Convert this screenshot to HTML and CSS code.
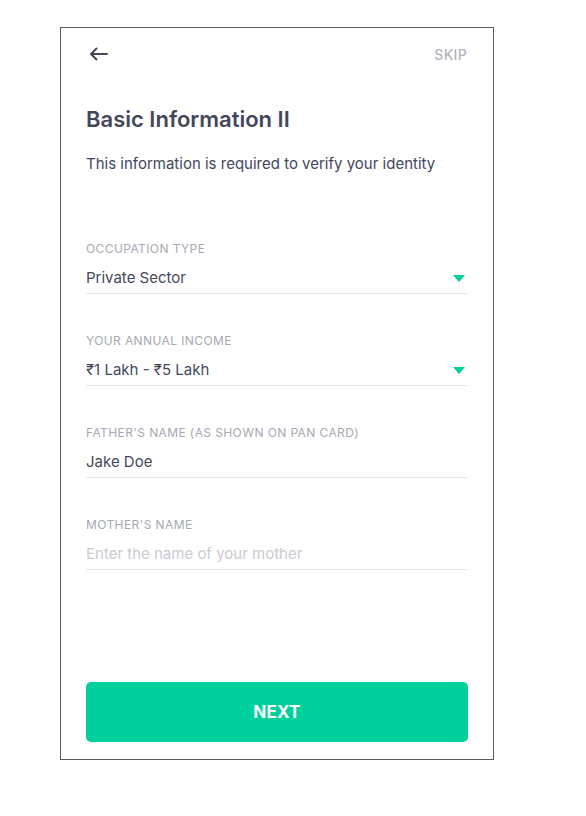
FILE: index.html
```html
<!DOCTYPE html>
<html lang="en">
<head>
<meta charset="utf-8">
<title>Basic Information II</title>
<link rel="stylesheet" href="styles.css">
</head>
<body>
<div class="frame">
  <header class="topbar">
    <svg class="back" width="24" height="24" viewBox="0 0 24 24" aria-label="Back">
      <path d="M21 12H5M10.5 6.5L5 12l5.5 5.5" fill="none" stroke="#44475b" stroke-width="2" stroke-linecap="round" stroke-linejoin="round"/>
    </svg>
    <span class="skip">SKIP</span>
  </header>

  <h1 class="title">Basic Information II</h1>
  <p class="subtitle">This information is required to verify your identity</p>

  <div class="fields">
    <div class="field">
      <div class="label">OCCUPATION TYPE</div>
      <div class="row">
        <span class="value">Private Sector</span>
        <span class="caret"></span>
      </div>
    </div>
    <div class="field">
      <div class="label">YOUR ANNUAL INCOME</div>
      <div class="row">
        <span class="value">₹1 Lakh - ₹5 Lakh</span>
        <span class="caret"></span>
      </div>
    </div>
    <div class="field">
      <div class="label">FATHER'S NAME (AS SHOWN ON PAN CARD)</div>
      <div class="row">
        <span class="value">Jake Doe</span>
      </div>
    </div>
    <div class="field">
      <div class="label">MOTHER'S NAME</div>
      <div class="row">
        <span class="value placeholder">Enter the name of your mother</span>
      </div>
    </div>
  </div>

  <button class="next">NEXT</button>
</div>
</body>
</html>
```

FILE: styles.css
```css
* { box-sizing: border-box; }

html, body {
  margin: 0;
  padding: 0;
  background: #ffffff;
}

body {
  font-family: Inter, Roboto, "Liberation Sans", Arial, sans-serif;
  color: #44475b;
}

.frame {
  margin: 27px 0 0 60px;
  width: 434px;
  height: 733px;
  border: 1px solid #5b5b5b;
  padding: 14px 25px 17px 25px;
  display: flex;
  flex-direction: column;
}

.topbar {
  height: 24px;
  display: flex;
  align-items: center;
  justify-content: space-between;
}

.back {
  display: block;
}

.skip {
  font-size: 14px;
  font-weight: 500;
  color: #b1b3bd;
  letter-spacing: 0.3px;
  margin-right: 1px;
}

.title {
  margin: 41px 0 0 0;
  font-size: 22px;
  line-height: 24px;
  font-weight: 600;
  color: #44475b;
}

.subtitle {
  margin: 23px 0 0 0;
  font-size: 15px;
  line-height: 20px;
  font-weight: 400;
  color: #44475b;
}

.fields {
  margin-top: 68px;
  display: flex;
  flex-direction: column;
  gap: 40px;
}

.field {
  border-bottom: 1px solid #e6e7eb;
}

.label {
  font-size: 12px;
  line-height: 14px;
  color: #a6a8b3;
  letter-spacing: 0.4px;
}

.row {
  margin-top: 12px;
  padding-bottom: 5px;
  display: flex;
  align-items: center;
  justify-content: space-between;
  height: 25px;
}

.row .value {
  font-size: 15px;
  line-height: 20px;
  color: #44475b;
  align-self: flex-start;
}

.row .value.placeholder {
  color: #c9cbd2;
}

.caret {
  width: 0;
  height: 0;
  border-left: 6px solid transparent;
  border-right: 6px solid transparent;
  border-top: 7px solid #00d09c;
  margin-right: 3px;
  align-self: flex-start;
  margin-top: 7px;
}

.next {
  margin-top: auto;
  height: 60px;
  width: 100%;
  border: none;
  border-radius: 5px;
  background: #00d09c;
  color: #ffffff;
  font-family: Inter, Roboto, "Liberation Sans", Arial, sans-serif;
  font-size: 17px;
  font-weight: 700;
  letter-spacing: 0.2px;
}
```
